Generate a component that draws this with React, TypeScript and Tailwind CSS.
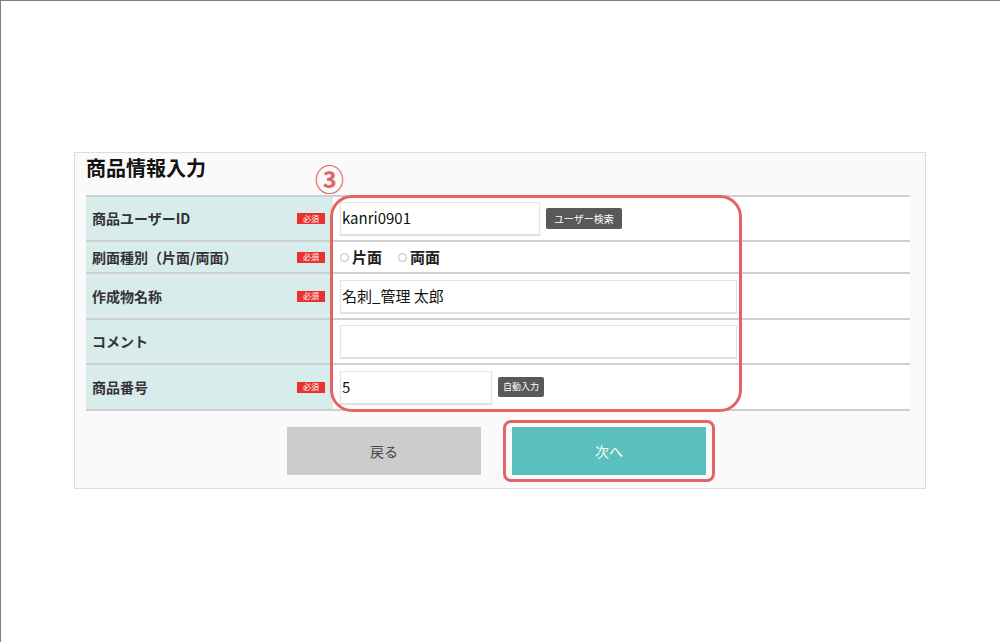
import React from 'react';

const FONT = { fontFamily: '"Noto Sans CJK JP", "Noto Sans", sans-serif' };

function Badge() {
  return (
    <span className="inline-flex h-[11px] w-[28px] items-center justify-center bg-[#e8322f] text-[8px] leading-none text-white">
      必須
    </span>
  );
}

function Radio({ label }: { label: string }) {
  return (
    <label className="flex items-center gap-[3px]">
      <span className="inline-block h-[9px] w-[9px] rounded-full border border-[#bbb] bg-white" />
      <span className="text-[15px] font-bold text-[#222]">{label}</span>
    </label>
  );
}

type Row = {
  label: string;
  required: boolean;
  height: string;
  content: React.ReactNode;
};

const inputCls =
  'h-[33px] border border-[#e2e2e2] bg-white px-[1px] text-[15px] text-[#111] shadow-[0_1px_1px_rgba(0,0,0,0.12)] flex items-center';

const rows: Row[] = [
  {
    label: '商品ユーザーID',
    required: true,
    height: 'h-[45px]',
    content: (
      <div className="flex items-center gap-[6px]">
        <div className={`${inputCls} w-[200px]`}>kanri0901</div>
        <button className="h-[21px] rounded-[2px] bg-[#595959] px-[8px] text-[10px] text-white">
          ユーザー検索
        </button>
      </div>
    ),
  },
  {
    label: '刷面種別（片面/両面）',
    required: true,
    height: 'h-[32px]',
    content: (
      <div className="flex items-center gap-[16px]">
        <Radio label="片面" />
        <Radio label="両面" />
      </div>
    ),
  },
  {
    label: '作成物名称',
    required: true,
    height: 'h-[46px]',
    content: <div className={`${inputCls} w-[397px]`}>名刺_管理 太郎</div>,
  },
  {
    label: 'コメント',
    required: false,
    height: 'h-[45px]',
    content: <div className={`${inputCls} w-[397px]`} />,
  },
  {
    label: '商品番号',
    required: true,
    height: 'h-[46px]',
    content: (
      <div className="flex items-center gap-[6px]">
        <div className={`${inputCls} w-[152px]`}>5</div>
        <button className="h-[20px] rounded-[2px] bg-[#595959] px-[5px] text-[9px] text-white">
          自動入力
        </button>
      </div>
    ),
  },
];

export default function App() {
  return (
    <div
      className="h-[642px] w-full overflow-hidden border-l border-t border-[#808080] bg-white pl-[73px] pt-[151px]"
      style={FONT}
    >
      <div className="h-[337px] w-[852px] border border-[#dcdcdc] bg-[#fafafa] pl-[11px] pr-[15px]">
        <h1 className="pt-[1px] text-[20px] font-bold leading-[28px] text-[#111]">商品情報入力</h1>

        {/* form table */}
        <div className="relative mt-[13px] border-t-2 border-[#cfcfcf]">
          {rows.map((row) => (
            <div key={row.label} className={`flex ${row.height} border-b-2 border-[#cfcfcf]`}>
              <div className="flex w-[247px] items-center justify-between bg-[#d9ecec] pl-[6px] pr-[8px]">
                <span className="text-[14px] font-bold text-[#333]">{row.label}</span>
                {row.required && <Badge />}
              </div>
              <div className="flex flex-1 items-center bg-white pl-[7px]">{row.content}</div>
            </div>
          ))}

          {/* annotation */}
          <span className="absolute left-[229px] top-[-33px] text-[29px] font-bold leading-none text-[#e36464]">
            ③
          </span>
          <div className="pointer-events-none absolute left-[244px] top-[-2px] h-[217px] w-[412px] rounded-[22px] border-[3px] border-[#e36464]" />
        </div>

        {/* actions */}
        <div className="mt-[9px] flex items-center justify-center gap-[22px] pl-[6px]">
          <button className="h-[48px] w-[194px] bg-[#cccccc] text-[14px] text-[#444]">戻る</button>
          <div className="rounded-[8px] border-[3px] border-[#e36464] px-[6px] py-[4px]">
            <button className="block h-[48px] w-[194px] bg-[#5bbfbd] text-[14px] text-white">次へ</button>
          </div>
        </div>
      </div>
    </div>
  );
}
